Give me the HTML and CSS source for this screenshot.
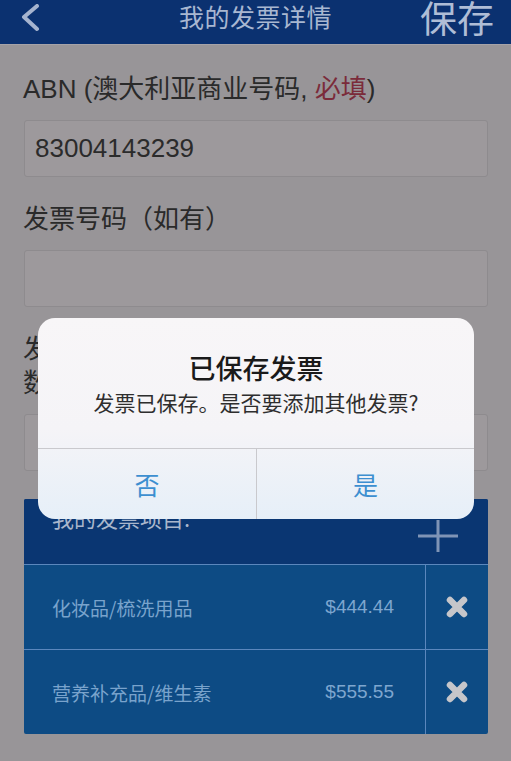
FILE: index.html
```html
<!DOCTYPE html>
<html lang="zh-CN">
<head>
<meta charset="utf-8">
<title>我的发票详情</title>
<link rel="stylesheet" href="styles.css">
</head>
<body>
<div class="page">
  <header class="topbar">
    <div class="topbar-left">
      <svg class="back" width="22" height="28" viewBox="0 0 22 28"><polyline points="17,2 4,13 17,25" fill="none" stroke="#a6b4cf" stroke-width="4" stroke-linecap="round" stroke-linejoin="round"/></svg>
    </div>
    <div class="topbar-title">我的发票详情</div>
    <div class="topbar-right">保存</div>
  </header>

  <main class="form">
    <div class="label first">ABN (澳大利亚商业号码, <span class="req">必填</span>)</div>
    <div class="field">83004143239</div>

    <div class="label">发票号码（如有）</div>
    <div class="field"></div>

    <div class="label multi"><span class="line">发票总金额（含商品及服务税的金额，</span><span class="line">数字填写）</span></div>
    <div class="field"></div>

    <section class="panel">
      <div class="panel-head">
        <div class="panel-title">我的发票项目:</div>
        <svg class="plus" width="40" height="32" viewBox="0 0 40 32"><path d="M20 0V32M0 16H40" stroke="#7f94b6" stroke-width="3" fill="none"/></svg>
      </div>
      <div class="row">
        <div class="row-main"><span class="name">化妆品/梳洗用品</span><span class="amount">$444.44</span></div>
        <div class="row-del"><svg width="24" height="24" viewBox="0 0 24 24"><path d="M5 5L19 19M19 5L5 19" stroke="#c6c6ca" stroke-width="6.5" stroke-linecap="round"/></svg></div>
      </div>
      <div class="row">
        <div class="row-main"><span class="name">营养补充品/维生素</span><span class="amount">$555.55</span></div>
        <div class="row-del"><svg width="24" height="24" viewBox="0 0 24 24"><path d="M5 5L19 19M19 5L5 19" stroke="#c6c6ca" stroke-width="6.5" stroke-linecap="round"/></svg></div>
      </div>
    </section>
  </main>

  <div class="overlay">
    <div class="dialog">
      <div class="dialog-body">
        <div class="dialog-title">已保存发票</div>
        <div class="dialog-msg">发票已保存。是否要添加其他发票?</div>
      </div>
      <div class="dialog-actions">
        <div class="btn">否</div>
        <div class="btn">是</div>
      </div>
    </div>
  </div>
</div>
</body>
</html>
```

FILE: styles.css
```css
* { box-sizing: border-box; }
html, body {
  margin: 0;
  padding: 0;
}
body {
  width: 511px;
  height: 761px;
  overflow: hidden;
  background: #989598;
  font-family: "Liberation Sans", "Noto Sans CJK SC", sans-serif;
}
.page {
  position: relative;
  width: 511px;
  height: 761px;
  overflow: hidden;
}
.topbar {
  height: 45px;
  background: #0b3170;
  border-bottom: 1px solid #a6a3a8;
  display: grid;
  grid-template-columns: 1fr auto 1fr;
  align-items: start;
}
.topbar-left {
  padding: 4px 0 0 20px;
}
.back { display: block; }
.topbar-title {
  font-family: "Noto Sans CJK SC", sans-serif;
  font-size: 25px;
  line-height: 32px;
  color: #a8b7d1;
  letter-spacing: 0.5px;
}
.topbar-right {
  justify-self: end;
  padding-right: 17px;
  font-family: "Noto Sans CJK SC", sans-serif;
  font-size: 37px;
  line-height: 34px;
  color: #afbdd6;
}
.form {
  padding: 0 23px 0 24px;
}
.label {
  font-size: 26px;
  line-height: 40px;
  color: #2a2a2a;
  margin-left: -1px;
  margin-bottom: 11px;
  margin-top: 22px;
}
.label.first { margin-top: 24px; }
.label.multi {
  margin-top: 25px;
  margin-bottom: 14px;
  line-height: 34px;
}
.label .line { display: block; white-space: nowrap; }
.req { color: #7b2b3a; }
.field {
  height: 57px;
  background: #9d999c;
  border: 1px solid #8e8b8e;
  border-radius: 3px;
  padding-left: 10px;
  font-size: 26px;
  line-height: 55px;
  color: #2b2b2b;
}
.panel {
  margin-top: 28px;
  background: #0d4b84;
  border-radius: 2px;
  overflow: hidden;
}
.panel-head {
  height: 65px;
  background: #0a3672;
  display: flex;
  justify-content: space-between;
  align-items: flex-start;
  padding: 0 30px 0 28px;
}
.panel-title {
  font-family: "Noto Sans CJK SC", sans-serif;
  font-size: 22px;
  line-height: 30px;
  margin-top: 3px;
  color: #a9b6cc;
}
.plus { margin-top: 21px; display: block; }
.row {
  display: grid;
  grid-template-columns: 1fr 63px;
  border-top: 1px solid #5b87bd;
  height: 85px;
}
.row-main {
  display: flex;
  justify-content: space-between;
  align-items: center;
  padding: 0 31px 0 28px;
}
.name {
  font-family: "Noto Sans CJK SC", sans-serif;
  font-size: 19px;
  color: #79a3cc;
}
.amount {
  font-size: 19px;
  color: #7ea6cf;
}
.row-del {
  border-left: 1px solid #5b87bd;
  display: flex;
  align-items: center;
  justify-content: center;
}
.row-del svg { display: block; }
.overlay {
  position: absolute;
  inset: 0;
  display: flex;
  justify-content: center;
  align-items: flex-start;
  padding-top: 318px;
  padding-left: 1px;
}
.dialog {
  width: 436px;
  height: 201px;
  border-radius: 17px;
  overflow: hidden;
  background: linear-gradient(#f8f6f8 0%, #f5f4f7 55%, #e6eff8 100%);
  display: flex;
  flex-direction: column;
  font-family: "Noto Sans CJK SC", sans-serif;
}
.dialog-body {
  height: 130px;
  text-align: center;
  padding-top: 32px;
}
.dialog-title {
  font-size: 27px;
  line-height: 36px;
  font-weight: 500;
  color: #1a1a1a;
}
.dialog-msg {
  font-size: 21px;
  line-height: 32px;
  color: #2e2e2e;
  margin-top: 0;
}
.dialog-actions {
  flex: 1;
  display: grid;
  grid-template-columns: 1fr 1fr;
  border-top: 1px solid #c9c9cd;
}
.btn {
  display: flex;
  align-items: center;
  justify-content: center;
  font-size: 25px;
  color: #3d8fd0;
}
.btn + .btn { border-left: 1px solid #c9c9cd; }
```
